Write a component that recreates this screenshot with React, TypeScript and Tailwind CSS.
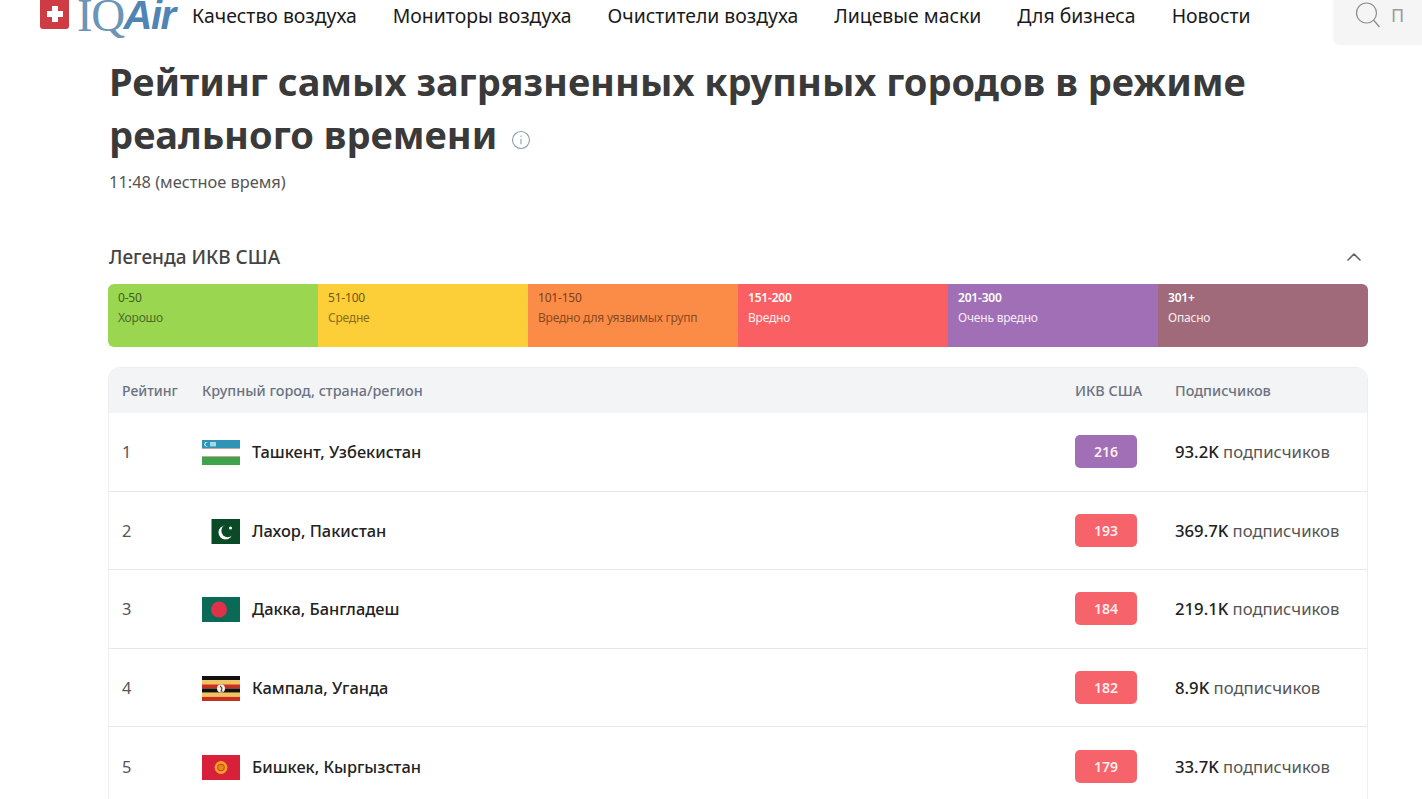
import { ChevronUp } from "lucide-react"

const navItems = ["Качество воздуха", "Мониторы воздуха", "Очистители воздуха", "Лицевые маски", "Для бизнеса", "Новости"]

const legend = [
    { range: "0-50", label: "Хорошо", bg: "bg-[#9ad64f]", text: "text-[#4b6b28]", first: "text-[#3f5c20]" },
    { range: "51-100", label: "Средне", bg: "bg-[#fcce38]", text: "text-[#8a6d1c]", first: "text-[#6f5714]" },
    { range: "101-150", label: "Вредно для уязвимых групп", bg: "bg-[#fb8c48]", text: "text-[#8a4a20]", first: "text-[#7a3f18]" },
    { range: "151-200", label: "Вредно", bg: "bg-[#f95f63]", text: "text-[#fff0ee]", first: "text-white" },
    { range: "201-300", label: "Очень вредно", bg: "bg-[#a06fb5]", text: "text-[#f6edf9]", first: "text-white" },
    { range: "301+", label: "Опасно", bg: "bg-[#a06a7b]", text: "text-[#f8edf0]", first: "text-white" },
]

function FlagUz() {
    return (
        <svg width="38" height="25" viewBox="0 0 38 25">
            <rect width="38" height="25" fill="#fff" />
            <rect width="38" height="8.5" fill="#2f95b5" />
            <rect y="16.5" width="38" height="8.5" fill="#3fa34d" />
            <rect y="8.3" width="38" height="0.6" fill="#e58a8a" />
            <rect y="16" width="38" height="0.6" fill="#e58a8a" />
            <circle cx="4.5" cy="4.2" r="2.2" fill="#fff" />
            <circle cx="5.4" cy="4.2" r="2" fill="#2f95b5" />
            <rect x="8" y="2" width="6" height="4.4" fill="#a9d6e4" />
        </svg>
    )
}

function FlagPk() {
    return (
        <svg width="38" height="25" viewBox="0 0 38 25">
            <rect x="9.5" width="28.5" height="25" fill="#0b4a26" />
            <circle cx="23.5" cy="13.5" r="7" fill="#fff" />
            <circle cx="25.7" cy="11.8" r="6.4" fill="#0b4a26" />
            <circle cx="28.5" cy="9" r="1.5" fill="#fff" />
        </svg>
    )
}

function FlagBd() {
    return (
        <svg width="38" height="25" viewBox="0 0 38 25">
            <rect width="38" height="25" fill="#0a6a55" />
            <circle cx="17" cy="12.5" r="8" fill="#e0314b" />
        </svg>
    )
}

function FlagUg() {
    return (
        <svg width="38" height="25" viewBox="0 0 38 25">
            <rect width="38" height="4.2" fill="#111" />
            <rect y="4.2" width="38" height="4.2" fill="#f5c35a" />
            <rect y="8.4" width="38" height="4.2" fill="#c5301f" />
            <rect y="12.5" width="38" height="4.2" fill="#111" />
            <rect y="16.7" width="38" height="4.2" fill="#f5c35a" />
            <rect y="20.9" width="38" height="4.1" fill="#c5301f" />
            <circle cx="19" cy="12.5" r="4" fill="#f4efe6" />
            <path d="M18 10 Q21 12 19 15 L20.5 15.5" stroke="#5a4a3a" strokeWidth="1.2" fill="none" />
        </svg>
    )
}

function FlagKg() {
    return (
        <svg width="38" height="25" viewBox="0 0 38 25">
            <rect width="38" height="25" fill="#d9203a" />
            <circle cx="19" cy="12.5" r="6.4" fill="#f4a223" />
            <circle cx="19" cy="12.5" r="3.4" fill="#e8861e" stroke="#c8401f" strokeWidth="1" />
        </svg>
    )
}

const rows = [
    { rank: 1, city: "Ташкент, Узбекистан", flag: <FlagUz />, aqi: 216, badge: "bg-[#a06fb5]", count: "93.2K" },
    { rank: 2, city: "Лахор, Пакистан", flag: <FlagPk />, aqi: 193, badge: "bg-[#f6636a]", count: "369.7K" },
    { rank: 3, city: "Дакка, Бангладеш", flag: <FlagBd />, aqi: 184, badge: "bg-[#f6636a]", count: "219.1K" },
    { rank: 4, city: "Кампала, Уганда", flag: <FlagUg />, aqi: 182, badge: "bg-[#f6636a]", count: "8.9K" },
    { rank: 5, city: "Бишкек, Кыргызстан", flag: <FlagKg />, aqi: 179, badge: "bg-[#f6636a]", count: "33.7K" },
]

function Logo() {
    return (
        <div className="flex items-start -mt-[7px]">
            <div className="w-[29px] h-[36px] bg-[#cf3b42] rounded-[3px] flex items-center justify-center pt-[6px]">
                <svg width="20" height="20" viewBox="0 0 20 20">
                    <path d="M7 2h6v5h5v6h-5v5H7v-5H2V7h5z" fill="#fff" />
                </svg>
            </div>
            <div className="ml-[8px] h-[52px] flex items-start text-[47px] leading-[45px] text-[#6a95b8] tracking-[-1.5px] whitespace-nowrap">
                <span className="font-['Liberation_Serif',serif]">IQ</span>
                <span className="font-['Liberation_Sans',sans-serif] font-bold italic text-[#4f84b5] text-[40px]">Air</span>
            </div>
        </div>
    )
}

export default function App() {
    return (
        <div className="h-[799px] w-[1422px] overflow-hidden bg-white font-['Noto_Sans',sans-serif] text-[#3a3a3a]">
            <header className="h-[45px] flex items-start pl-[40px] overflow-hidden">
                <div className="w-[152px] shrink-0">
                    <Logo />
                </div>
                <nav className="flex gap-[36px] pt-[2px] text-[19.4px] leading-[28px] text-[#1a1a1a]">
                    {navItems.map((item) => (
                        <span key={item} className="whitespace-nowrap">{item}</span>
                    ))}
                </nav>
                <div className="ml-auto w-[89px] h-[45px] bg-[#f5f5f5] rounded-bl-md flex items-start pl-[22px] pt-[2px] gap-[10px]">
                    <svg width="26" height="26" viewBox="0 0 26 26" fill="none" stroke="#8c8c8c" strokeWidth="1.2" className="shrink-0">
                        <circle cx="11.5" cy="11" r="10" />
                        <path d="M18.5 18l6 7" />
                    </svg>
                    <span className="text-[18px] leading-[27px] text-[#9a9a9a]">П</span>
                </div>
            </header>

            <main className="pl-[108px] pr-[54px]">
                <h1 className="mt-[10px] text-[38px] leading-[53px] font-bold text-[#3a3a3a] pl-px">
                    Рейтинг самых загрязненных крупных городов в режиме реального времени
                    <svg width="20" height="20" viewBox="0 0 20 20" fill="none" stroke="#8aa0ad" strokeWidth="1.1" className="inline-block ml-[14px] align-[-1px]">
                        <circle cx="10" cy="10" r="8.5" />
                        <path d="M10 8.8v5.4M10 5.6v1.4" />
                    </svg>
                </h1>
                <div className="mt-[9px] text-[16.4px] leading-[24px] text-[#555] pl-px">11:48 (местное время)</div>

                <div className="mt-[50px] flex items-center justify-between pl-px pr-[2px] h-[27px]">
                    <span className="text-[19px] font-medium text-[#444]">Легенда ИКВ США</span>
                    <ChevronUp size={24} strokeWidth={1.6} className="text-[#5a6470] -mt-[2px]" />
                </div>

                <div className="mt-[13px] h-[63px] grid grid-cols-6 rounded-md overflow-hidden">
                    {legend.map((l) => (
                        <div key={l.range} className={`${l.bg} px-[10px] pt-[4px] text-[12px] leading-[20px] tracking-[-0.2px]`}>
                            <div className={`${l.first} ${l.first === "text-white" ? "font-semibold" : ""}`}>{l.range}</div>
                            <div className={l.text}>{l.label}</div>
                        </div>
                    ))}
                </div>

                <div className="mt-[20px] border border-[#eceef0] rounded-t-xl">
                    <div className="h-[45px] flex items-center bg-[#f3f4f6] rounded-t-xl text-[14.4px] font-medium text-[#6b7280]">
                        <div className="w-[93px] pl-[13px] text-[14px]">Рейтинг</div>
                        <div className="flex-1">Крупный город, страна/регион</div>
                        <div className="w-[100px]">ИКВ США</div>
                        <div className="w-[192px]">Подписчиков</div>
                    </div>
                    {rows.map((r) => (
                        <div key={r.rank} className="h-[78.5px] flex items-center border-b border-[#e8e8e8] last:border-b-0">
                            <div className="w-[93px] pl-[13px] pt-[2px] text-[16.4px] text-[#555]">{r.rank}</div>
                            <div className="flex-1 flex items-center gap-[12px] pt-[2px]">
                                <span className="w-[38px] h-[25px] shrink-0">{r.flag}</span>
                                <span className="text-[16.4px] font-medium text-[#222]">{r.city}</span>
                            </div>
                            <div className="w-[100px]">
                                <div className={`${r.badge} w-[62px] h-[33px] rounded-[5px] flex items-center justify-center text-[14px] font-semibold text-[#fdeeee]`}>{r.aqi}</div>
                            </div>
                            <div className="w-[192px] text-[16.7px] text-[#555] whitespace-nowrap">
                                <span className="font-medium text-[#222]">{r.count}</span> подписчиков
                            </div>
                        </div>
                    ))}
                </div>
            </main>
        </div>
    )
}
